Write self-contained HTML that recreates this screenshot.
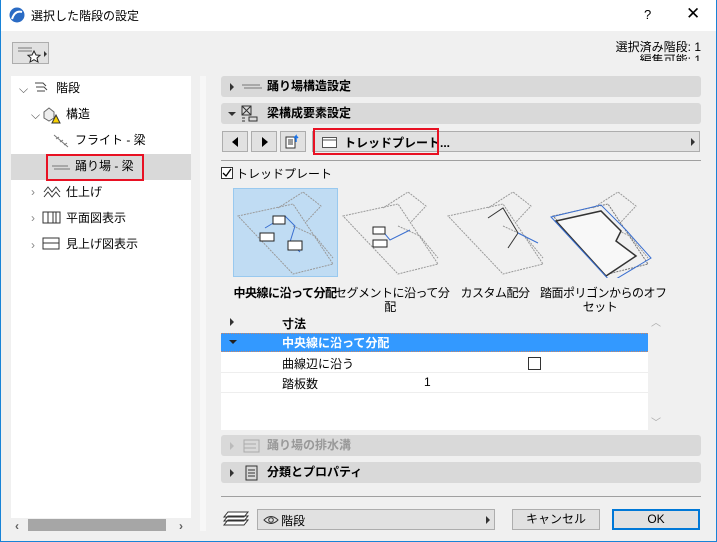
<!DOCTYPE html>
<html><head><meta charset="utf-8"><style>
*{box-sizing:border-box;margin:0;padding:0}
body{width:717px;height:542px;overflow:hidden;background:#f0f0f0;font-family:"Liberation Sans","Noto Sans CJK JP",sans-serif;font-size:12px;color:#000;position:relative}
.abs{position:absolute}
.win{position:absolute;left:0;top:0;width:717px;height:542px;border:1px solid #1883d7;border-top:none}
.title{position:absolute;left:0;top:0;width:717px;height:31px;background:#fff}
.hdr{position:absolute;left:221px;width:480px;height:21px;background:#d9d9d9;border-radius:3px;font-weight:bold;line-height:21px}
.btn{position:absolute;background:#e1e1e1;border:1px solid #adadad}
.tri-r{width:0;height:0;border-top:4px solid transparent;border-bottom:4px solid transparent;border-left:4px solid #333;position:absolute}
.tri-d{width:0;height:0;border-left:4px solid transparent;border-right:4px solid transparent;border-top:4px solid #333;position:absolute}
.tree div{position:absolute;line-height:20px}
.lbl{position:absolute;text-align:center;line-height:14px;white-space:nowrap;letter-spacing:-0.5px}
</style></head><body>
<div class="title">
 <svg class="abs" style="left:9px;top:7px" width="16" height="16"><circle cx="8" cy="8" r="7.5" fill="#2a6bc4"/><path d="M3 12 Q6 3 13 5" stroke="#fff" stroke-width="2" fill="none"/></svg>
 <div class="abs" style="left:31px;top:7px;font-size:12px">選択した階段の設定</div>
 <div class="abs" style="left:644px;top:7px;font-size:13px">?</div>
 <div class="abs" style="left:686px;top:4px;font-size:17px">✕</div>
</div>
<div class="win"></div>
<div class="btn" style="left:12px;top:42px;width:37px;height:22px;background:#e1e1e1">
 <svg width="37" height="22"><path d="M5 5h14M5 8h14" stroke="#777"/><path d="M21 8l2 4 4 .3-3 2.7 1 4-4-2.3-4 2.3 1-4-3-2.7 4-.3z" fill="#fff" stroke="#222"/><path d="M31 8l3 3-3 3z" fill="#333"/></svg>
</div>
<div class="abs" style="right:16px;top:41px;text-align:right;line-height:13px">選択済み階段: 1<br><span style="display:inline-block;height:7px;overflow:hidden;vertical-align:top">編集可能: 1</span></div>

<div class="abs" style="left:11px;top:76px;width:180px;height:442px;background:#fff"></div>
<div class="abs" style="left:200px;top:76px;width:6px;height:455px;background:#f7f7f7"></div>
<div class="abs" style="left:11px;top:154px;width:180px;height:26px;background:#d9d9d9"></div>
<div class="tree">
 <div style="left:19px;top:79px;color:#555">⌵</div>
 <div style="left:33px;top:79px"><svg width="16" height="16"><path d="M2 4h8l3 3M3 8h8l3 3M4 12h8" stroke="#444" fill="none"/></svg></div>
 <div style="left:56px;top:78px">階段</div>
 <div style="left:31px;top:105px;color:#555">⌵</div>
 <div style="left:42px;top:106px"><svg width="20" height="18"><path d="M2 6l5-4 5 4v6l-5 3-5-3z" fill="#eee" stroke="#666"/><path d="M10 17l4-8 4 8z" fill="#f6d000" stroke="#333"/></svg></div>
 <div style="left:66px;top:104px">構造</div>
 <div style="left:52px;top:133px"><svg width="18" height="16"><path d="M2 2l14 12M4 6l3-2M8 9l3-2M12 12l3-2" stroke="#777" fill="none"/></svg></div>
 <div style="left:75px;top:130px">フライト - 梁</div>
 <div style="left:46px;top:154px;width:98px;height:27px;border:2px solid #e81123"></div>
 <div style="left:51px;top:160px"><svg width="20" height="12"><path d="M1 4h16M3 7h16" stroke="#777"/></svg></div>
 <div style="left:75px;top:156px">踊り場 - 梁</div>
 <div style="left:31px;top:182px;color:#888">›</div>
 <div style="left:42px;top:184px"><svg width="20" height="16"><path d="M2 8l4-5 4 5 4-5 4 5M2 13l4-5 4 5 4-5 4 5" stroke="#333" fill="none"/></svg></div>
 <div style="left:66px;top:182px">仕上げ</div>
 <div style="left:31px;top:208px;color:#888">›</div>
 <div style="left:42px;top:211px"><svg width="20" height="14"><rect x="1" y="1" width="17" height="11" fill="none" stroke="#333"/><path d="M6 1v11M11 1v11M14 1v11" stroke="#333"/></svg></div>
 <div style="left:66px;top:208px">平面図表示</div>
 <div style="left:31px;top:235px;color:#888">›</div>
 <div style="left:42px;top:237px"><svg width="20" height="14"><rect x="1" y="1" width="16" height="11" fill="none" stroke="#333"/><path d="M1 6h16" stroke="#333"/></svg></div>
 <div style="left:66px;top:234px">見上げ図表示</div>
</div>
<div class="abs" style="left:15px;top:519px;color:#606060;font-weight:bold">‹</div>
<div class="abs" style="left:28px;top:519px;width:138px;height:12px;background:#a6a6a6"></div>
<div class="abs" style="left:179px;top:519px;color:#606060;font-weight:bold">›</div>

<div class="hdr" style="top:76px"><div class="tri-r" style="left:9px;top:7px"></div><svg class="abs" style="left:20px;top:6px" width="22" height="10"><path d="M1 3h18M3 6h18" stroke="#777"/></svg><span class="abs" style="left:46px">踊り場構造設定</span></div>
<div class="hdr" style="top:103px"><div class="tri-d" style="left:7px;top:9px"></div><svg class="abs" style="left:20px;top:2px" width="18" height="17"><rect x="1" y="1" width="9" height="9" fill="none" stroke="#333"/><path d="M1 1l9 9M10 1l-9 9M8 12h8v4H8zM1 13h3M1 16h3" stroke="#333" fill="none"/></svg><span class="abs" style="left:46px">梁構成要素設定</span></div>

<div class="btn" style="left:222px;top:131px;width:26px;height:21px"><div class="abs" style="left:9px;top:5px;border-top:5px solid transparent;border-bottom:5px solid transparent;border-right:6px solid #000"></div></div>
<div class="btn" style="left:251px;top:131px;width:26px;height:21px"><div class="abs" style="left:10px;top:5px;border-top:5px solid transparent;border-bottom:5px solid transparent;border-left:6px solid #000"></div></div>
<div class="btn" style="left:280px;top:131px;width:26px;height:21px"><svg width="24" height="19"><rect x="5" y="5" width="9" height="11" fill="#fff" stroke="#333"/><path d="M7 8h5M7 10h5M7 12h5" stroke="#333"/><path d="M15 10V4l-2 2M15 4l2 2" stroke="#1a73e8" stroke-width="1.5" fill="none"/></svg></div>
<div class="btn" style="left:312px;top:131px;width:388px;height:21px"><svg class="abs" style="left:9px;top:5px" width="16" height="11"><rect x="0.5" y="0.5" width="14" height="10" fill="#fff" stroke="#555"/><path d="M1 3h13" stroke="#555"/></svg><span class="abs" style="left:31px;top:2px;font-weight:bold">トレッドプレート...</span><div class="tri-r" style="right:4px;top:6px"></div></div>
<div class="abs" style="left:313px;top:128px;width:126px;height:27px;border:2px solid #e81123"></div>
<div class="abs" style="left:221px;top:160px;width:480px;height:1px;background:#a0a0a0"></div>

<div class="abs" style="left:221px;top:167px;width:12px;height:12px;border:1px solid #333;background:#fff"><svg width="10" height="10" style="position:absolute;left:0;top:0"><path d="M1 5l3 3 5-7" stroke="#000" fill="none" stroke-width="1.3"/></svg></div>
<div class="abs" style="left:236px;top:165px">トレッドプレート</div>

<div class="abs" style="left:233px;top:188px;width:105px;height:89px;background:#c0dcf3;border:1px solid #99c9ef"></div>
<svg class="abs" style="left:233px;top:188px" width="440" height="90">
 <g fill="none" stroke="#999" stroke-dasharray="2 1">
  <path d="M5 28l55-12 40 60-40 10z"/>
  <path d="M45 20l25-16 18 14-15 16M60 38l22 10 18 22" />
  <path d="M110 28l55-12 40 60-40 10z"/>
  <path d="M150 20l25-16 18 14-15 16M165 38l22 10 18 22"/>
  <path d="M215 28l55-12 40 60-40 10z"/>
  <path d="M255 20l25-16 18 14-15 16M270 38l22 10 18 22"/>
  <path d="M320 28l55-12 40 60-40 10z" stroke="#777"/>
  <path d="M360 20l25-16 18 14-15 16M375 38l22 10 18 22"/>
 </g>
 <path d="M32 40l20-12 10 10 -5 16 10 10" stroke="#3a6fd0" fill="none"/>
 <g fill="#fff" stroke="#222"><rect x="40" y="28" width="12" height="8"/><rect x="27" y="45" width="14" height="8"/><rect x="55" y="53" width="14" height="9"/></g>
 <path d="M147 40l10 12 20-10" stroke="#3a6fd0" fill="none"/>
 <g fill="#fff" stroke="#222"><rect x="140" y="39" width="12" height="7"/><rect x="140" y="52" width="14" height="7"/></g>
 <path d="M255 30l15-10 15 25-10 15" stroke="#333" fill="none"/>
 <path d="M285 45l20 10" stroke="#3a6fd0"/>
 <path d="M323 33l45-10 20 20-5 10 20 15-30 20z" fill="#f8f8f8" stroke="#333" stroke-width="1.5"/>
 <path d="M318 29l50-12 25 25 25 28-40 24z" fill="none" stroke="#3a6fd0"/>
</svg>
<div class="lbl" style="left:225px;top:286px;width:120px;font-weight:bold">中央線に沿って分配</div>
<div class="lbl" style="left:335px;top:286px;width:110px">セグメントに沿って分<br>配</div>
<div class="lbl" style="left:440px;top:286px;width:110px">カスタム配分</div>
<div class="lbl" style="left:540px;top:286px;width:120px">踏面ポリゴンからのオフ<br>セット</div>

<div class="abs" style="left:221px;top:313px;width:427px;height:117px;background:#fff"></div>
<div class="abs" style="left:221px;top:313px;width:427px;height:20px;background:#f0f0f0"></div>
<div class="tri-r" style="left:230px;top:318px"></div>
<div class="abs" style="left:282px;top:315px;font-weight:bold">寸法</div>
<div class="abs" style="left:221px;top:333px;width:427px;height:19px;background:#3399ff;border-top:1px dotted #c86;border-bottom:1px dotted #c86"></div>
<div class="tri-d" style="left:229px;top:340px;border-top-color:#222"></div>
<div class="abs" style="left:282px;top:334px;font-weight:bold;color:#fff">中央線に沿って分配</div>
<div class="abs" style="left:282px;top:355px">曲線辺に沿う</div>
<div class="abs" style="left:528px;top:357px;width:13px;height:13px;border:1px solid #333"></div>
<div class="abs" style="left:221px;top:372px;width:427px;height:1px;background:#eee"></div>
<div class="abs" style="left:282px;top:375px">踏板数</div>
<div class="abs" style="left:424px;top:375px">1</div>
<div class="abs" style="left:221px;top:392px;width:427px;height:1px;background:#eee"></div>
<div class="abs" style="left:651px;top:314px;color:#aaa;font-size:10px">︿</div>
<div class="abs" style="left:651px;top:414px;color:#aaa;font-size:10px">﹀</div>

<div class="hdr" style="top:435px;color:#999;font-weight:bold"><div class="tri-r" style="left:9px;top:7px;border-left-color:#bbb"></div><svg class="abs" style="left:22px;top:4px" width="18" height="14"><rect x="1" y="1" width="15" height="12" fill="none" stroke="#aaa"/><path d="M1 5h12M1 9h12" stroke="#aaa"/></svg><span class="abs" style="left:46px">踊り場の排水溝</span></div>
<div class="hdr" style="top:462px"><div class="tri-r" style="left:9px;top:7px"></div><svg class="abs" style="left:24px;top:3px" width="14" height="16"><rect x="1" y="1" width="11" height="14" fill="none" stroke="#333"/><path d="M3 5h7M3 8h7M3 11h7" stroke="#333"/></svg><span class="abs" style="left:46px">分類とプロパティ</span></div>
<div class="abs" style="left:221px;top:496px;width:480px;height:1px;background:#a0a0a0"></div>

<svg class="abs" style="left:222px;top:510px" width="28" height="18"><path d="M6 2h20l-4 5H2zM6 6h20l-4 5H2zM6 10h20l-4 5H2z" fill="#fff" stroke="#333"/></svg>
<div class="btn" style="left:257px;top:509px;width:238px;height:21px"><svg class="abs" style="left:5px;top:4px" width="16" height="12"><path d="M1 6Q8-1 15 6Q8 13 1 6z" fill="none" stroke="#333"/><circle cx="8" cy="6" r="2.3" fill="none" stroke="#333"/></svg><span class="abs" style="left:23px;top:2px">階段</span><div class="tri-r" style="right:4px;top:6px"></div></div>
<div class="btn" style="left:512px;top:509px;width:88px;height:21px;text-align:center;line-height:19px">キャンセル</div>
<div class="btn" style="left:612px;top:509px;width:88px;height:21px;text-align:center;line-height:17px;border:2px solid #0078d7">OK</div>
</body></html>
